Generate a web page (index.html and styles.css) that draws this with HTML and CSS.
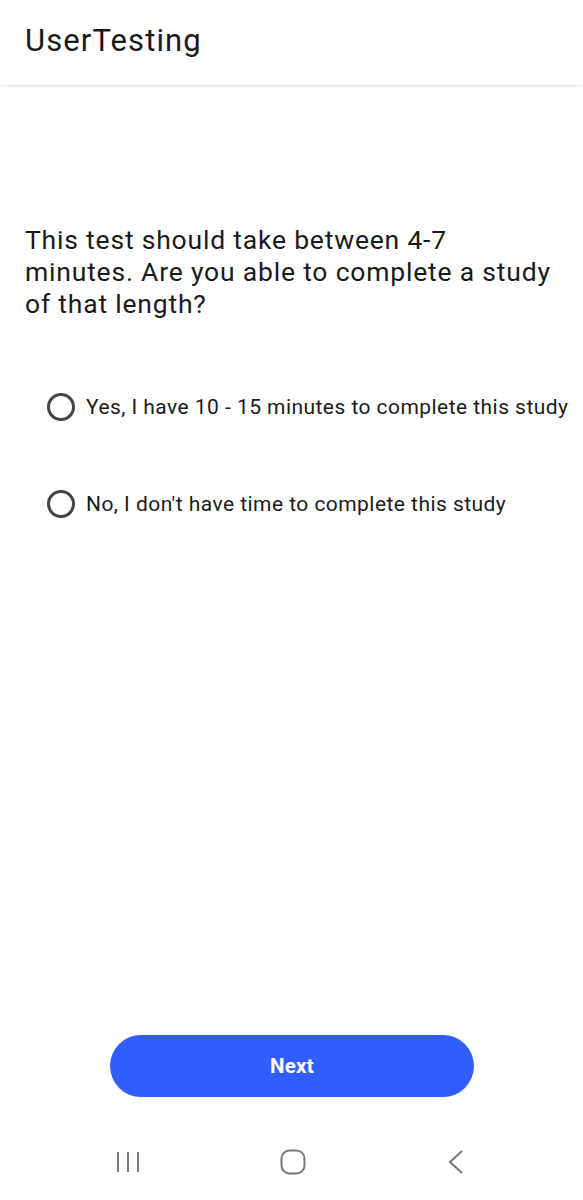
FILE: index.html
```html
<!DOCTYPE html>
<html lang="en">
<head>
<meta charset="UTF-8" />
<meta name="viewport" content="width=device-width, initial-scale=1" />
<title>UserTesting</title>
<link rel="stylesheet" href="styles.css">
</head>
<body>

<header class="app-bar">
  <h1>UserTesting</h1>
</header>

<main class="content">
  <p class="question">This test should take between 4-7 minutes. Are you able to complete a study of that length?</p>

  <div class="options">
    <label class="option">
      <span class="radio"></span>
      <span class="option-text">Yes, I have 10 - 15 minutes to complete this study</span>
    </label>
    <label class="option">
      <span class="radio"></span>
      <span class="option-text">No, I don't have time to complete this study</span>
    </label>
  </div>
</main>

<div class="footer">
  <button class="next-btn">Next</button>
</div>

<nav class="system-nav">
  <svg width="24" height="22" viewBox="0 0 24 22">
    <path d="M2 1v20M12 1v20M22 1v20" stroke="#777" stroke-width="2" fill="none" />
  </svg>
  <svg width="26" height="26" viewBox="0 0 26 26">
    <rect x="1.5" y="1.5" width="23" height="23" rx="8" stroke="#777" stroke-width="2" fill="none" />
  </svg>
  <svg width="20" height="26" viewBox="0 0 20 26">
    <path d="M16 2L4 13l12 11" stroke="#777" stroke-width="2" fill="none" />
  </svg>
</nav>

</body>
</html>
```

FILE: styles.css
```css
body {
  margin: 0;
  width: 583px;
  height: 1200px;
  background: #fff;
  color: #1c1c1c;
  font-family: Roboto, "Noto Sans", sans-serif;
  display: flex;
  flex-direction: column;
}
.app-bar {
  height: 86px;
  box-sizing: border-box;
  padding: 0 25px;
  display: flex;
  align-items: center;
  border-bottom: 1px solid #e6e6e6;
  box-shadow: 0 1px 2px rgba(0, 0, 0, 0.06);
}
.app-bar h1 {
  margin: 0;
  font-size: 31px;
  font-weight: 400;
  letter-spacing: 1.1px;
  color: #1a1a1a;
  padding-bottom: 4px;
}
.content {
  padding: 138px 25px 0;
  flex: 1;
}
.question {
  margin: 0;
  font-size: 26.5px;
  line-height: 32px;
  letter-spacing: 0.8px;
  color: #1a1a1a;
}
.options {
  margin-top: 72px;
  padding-left: 22px;
  display: flex;
  flex-direction: column;
  gap: 67px;
}
.option {
  display: flex;
  align-items: center;
  gap: 11px;
  height: 30px;
}
.radio {
  width: 22px;
  height: 22px;
  border: 3px solid #444;
  border-radius: 50%;
  flex-shrink: 0;
}
.option-text {
  font-size: 21px;
  letter-spacing: 0.45px;
  color: #1a1a1a;
  white-space: nowrap;
}
.footer {
  display: flex;
  justify-content: center;
  padding-bottom: 35px;
}
.next-btn {
  width: 364px;
  height: 62px;
  border: none;
  border-radius: 31px;
  background: #335eff;
  color: #fff;
  font-family: Roboto, sans-serif;
  font-size: 20.5px;
  font-weight: 700;
  letter-spacing: 0.3px;
  margin-left: 1px;
}
.system-nav {
  height: 60px;
  display: flex;
  justify-content: space-between;
  align-items: center;
  padding: 0 117px 8px 116px;
}
```
